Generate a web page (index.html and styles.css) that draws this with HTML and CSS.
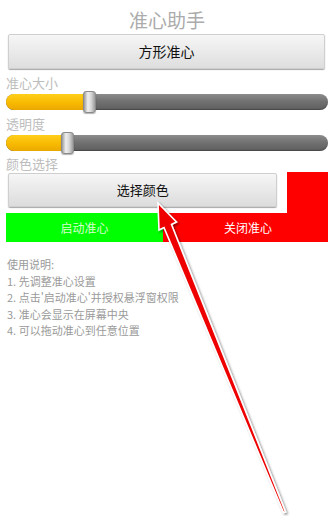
FILE: index.html
```html
<!DOCTYPE html>
<html lang="zh">
<head>
<meta charset="utf-8">
<title>准心助手</title>
<link rel="stylesheet" href="styles.css">
</head>
<body>
<div class="app">
  <div class="title">准心助手</div>
  <div class="btn-main">方形准心</div>
  <div class="label first">准心大小</div>
  <div class="slider">
    <div class="track"><div class="fill" style="width: 79px"></div></div>
    <div class="thumb" style="left: 77px"></div>
  </div>
  <div class="label">透明度</div>
  <div class="slider">
    <div class="track"><div class="fill" style="width: 57px"></div></div>
    <div class="thumb" style="left: 55px"></div>
  </div>
  <div class="label last">颜色选择</div>
  <div class="color-row">
    <div class="btn-select">选择颜色</div>
    <div class="swatch"></div>
  </div>
  <div class="action-row">
    <div class="btn-start">启动准心</div>
    <div class="btn-stop">关闭准心</div>
  </div>
  <div class="help">
    <div>使用说明:</div>
    <div>1. 先调整准心设置</div>
    <div>2. 点击'启动准心'并授权悬浮窗权限</div>
    <div>3. 准心会显示在屏幕中央</div>
    <div>4. 可以拖动准心到任意位置</div>
  </div>
</div>
<svg class="arrow" width="333" height="516" viewBox="0 0 333 516">
  <defs>
    <filter id="sh" x="-20%" y="-20%" width="140%" height="140%">
      <feDropShadow dx="1.5" dy="1.5" stdDeviation="1.2" flood-color="#000" flood-opacity="0.45"/>
    </filter>
  </defs>
  <polygon filter="url(#sh)" points="158,203 176.5,222 171.5,224.5 285.5,512 283.5,512.5 164,227.5 159,230" fill="#ee0000" stroke="#ffffff" stroke-width="1.6" stroke-linejoin="miter"/>
</svg>
</body>
</html>
```
FILE: styles.css
```css
html, body {
  margin: 0;
  padding: 0;
  background: #ffffff;
}
body {
  width: 333px;
  height: 516px;
  position: relative;
  overflow: hidden;
  font-family: "Noto Sans CJK SC", "Noto Sans", sans-serif;
}
.app {
  padding: 0 5px 0 6px;
}
.title {
  padding-top: 6px;
  height: 28px;
  line-height: 28px;
  font-size: 19px;
  color: #ababab;
  text-align: center;
}
.btn-main {
  margin: 0 3px 0 2px;
  height: 33px;
  line-height: 33px;
  text-align: center;
  font-size: 14px;
  color: #111;
  background: linear-gradient(#f6f6f6, #dedede);
  border: 1px solid #cfcfcf;
  border-radius: 2px;
  box-shadow: 0 1px 1px rgba(0,0,0,0.35);
}
.label {
  font-size: 13px;
  line-height: 17px;
  height: 17px;
  color: #bdbdbd;
}
.label.first {
  margin-top: 5px;
}
.label.last {
  line-height: 16px;
  height: 16px;
}
.slider {
  position: relative;
  height: 24px;
  padding-top: 3px;
  box-sizing: border-box;
}
.track {
  height: 16px;
  border-radius: 8px;
  background: linear-gradient(#8c8c8c, #727272 45%, #5e5e5e);
  overflow: hidden;
  box-shadow: inset 0 -1px 1px rgba(0,0,0,0.25);
}
.fill {
  height: 100%;
  background: linear-gradient(#ffcf1a, #f7b800 60%, #eaa800);
}
.thumb {
  position: absolute;
  top: 0;
  width: 13px;
  height: 22px;
  box-sizing: border-box;
  border: 1px solid #8a8a8a;
  border-radius: 3px;
  background: linear-gradient(to right, #9a9a9a, #efefef 35%, #d6d6d6 65%, #9c9c9c);
  box-shadow: 0 1px 1px rgba(0,0,0,0.3);
}
.color-row {
  display: flex;
  align-items: flex-start;
  height: 41px;
}
.btn-select {
  margin: 1px 0 0 2px;
  width: 269px;
  height: 32px;
  line-height: 32px;
  text-align: center;
  font-size: 13px;
  color: #111;
  background: linear-gradient(#f6f6f6, #dcdcdc);
  border: 1px solid #cfcfcf;
  border-radius: 2px;
  box-shadow: 0 1px 1px rgba(0,0,0,0.35);
}
.swatch {
  margin-left: 10px;
  width: 41px;
  height: 41px;
  background: #ff0000;
}
.action-row {
  display: flex;
  height: 29px;
}
.btn-start {
  width: 157px;
  line-height: 29px;
  text-align: center;
  font-size: 12px;
  color: #d8ffd0;
  background: #00ff00;
}
.btn-stop {
  flex: 1;
  line-height: 29px;
  text-align: center;
  font-size: 12px;
  color: #ffffff;
  background: #ff0000;
  padding-left: 5px;
}
.help {
  margin-top: 14px;
  font-size: 11px;
  line-height: 16.5px;
  color: #9a9a9a;
  padding-left: 1px;
}
.arrow {
  position: absolute;
  left: 0;
  top: 0;
  pointer-events: none;
}
```
